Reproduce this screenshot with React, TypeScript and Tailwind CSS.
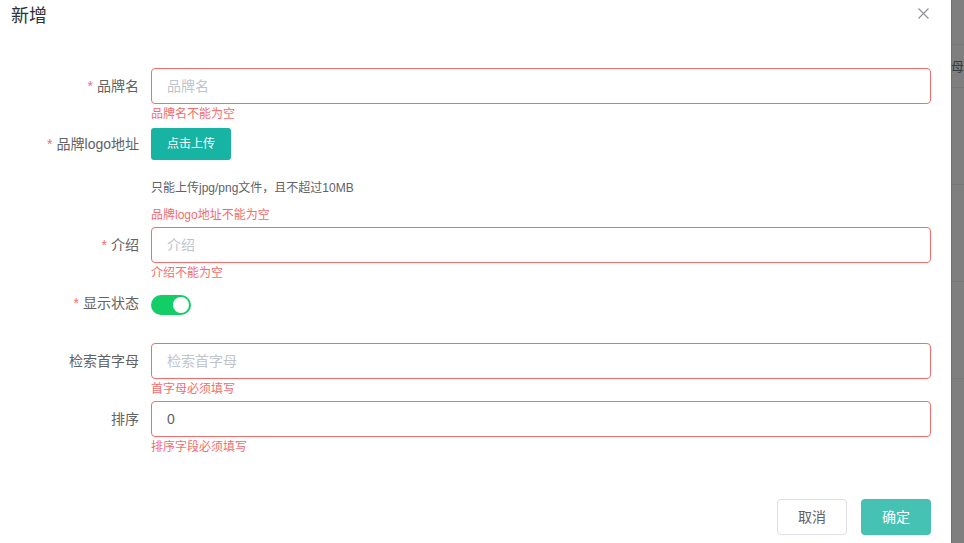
import React from "react";

const font = "font-['Liberation_Sans','Noto_Sans_CJK_SC',sans-serif]";

function Label({ text, required, lh }: { text: string; required?: boolean; lh: string }) {
  return (
    <div className={`w-[151px] shrink-0 pr-[12px] text-right text-[14px] text-[#606266] ${lh}`}>
      {required && <span className="mr-[4px] text-[#f56c6c]">*</span>}
      {text}
    </div>
  );
}

function Field({
  label,
  required,
  placeholder,
  value,
  error,
  h,
}: {
  label: string;
  required?: boolean;
  placeholder?: string;
  value?: string;
  error: string;
  h: string;
}) {
  return (
    <div className={`flex ${h}`}>
      <Label text={label} required={required} lh="leading-[36px]" />
      <div className="mr-[20px] flex-1">
        <div className="flex h-[36px] items-center rounded-[4px] border border-[#f56c6c] px-[15px] text-[14px]">
          {value ? (
            <span className="text-[#606266]">{value}</span>
          ) : (
            <span className="text-[#c0c4cc]">{placeholder}</span>
          )}
        </div>
        <p className="pt-[4px] text-[12px] leading-[13px] text-[#f56c6c]">{error}</p>
      </div>
    </div>
  );
}

export default function App() {
  return (
    <div className={`flex h-[543px] w-[964px] overflow-hidden bg-white ${font}`}>
      <div className="relative w-[951px] shrink-0 bg-white">
        <div className="flex h-[68px] items-start justify-between">
          <h2 className="pl-[11px] pt-[4px] text-[18px] leading-[24px] text-[#303133]">新增</h2>
          <svg className="mr-[22px] mt-[8px]" width="11" height="11" viewBox="0 0 11 11">
            <path d="M0.5 0.5L10.5 10.5M10.5 0.5L0.5 10.5" stroke="#909399" strokeWidth="1.2" />
          </svg>
        </div>

        <Field label="品牌名" required placeholder="品牌名" error="品牌名不能为空" h="h-[60px]" />

        <div className="flex h-[99px]">
          <Label text="品牌logo地址" required lh="leading-[32px]" />
          <div className="flex-1">
            <button className="h-[32px] w-[80px] rounded-[3px] bg-[#17b3a3] text-[12px] text-white">
              点击上传
            </button>
            <p className="mt-[21px] text-[12px] leading-[14px] text-[#606266]">
              只能上传jpg/png文件，且不超过10MB
            </p>
            <p className="mt-[13px] text-[12px] leading-[14px] text-[#f56c6c]">品牌logo地址不能为空</p>
          </div>
        </div>

        <Field label="介绍" required placeholder="介绍" error="介绍不能为空" h="h-[68px]" />

        <div className="flex h-[48px]">
          <Label text="显示状态" required lh="leading-[16px]" />
          <div className="flex h-[20px] w-[40px] items-center justify-end rounded-full bg-[#13ce66] px-[2px]">
            <div className="h-[16px] w-[16px] rounded-full bg-white" />
          </div>
        </div>

        <Field label="检索首字母" placeholder="检索首字母" error="首字母必须填写" h="h-[58px]" />

        <Field label="排序" value="0" error="排序字段必须填写" h="h-[98px]" />

        <div className="flex justify-end gap-[14px] pr-[20px]">
          <button className="h-[36px] w-[70px] rounded-[4px] border border-[#dcdfe6] bg-white text-[14px] text-[#606266]">
            取消
          </button>
          <button className="h-[36px] w-[70px] rounded-[4px] bg-[#46c2b5] text-[14px] text-white">
            确定
          </button>
        </div>
      </div>

      <div className="flex flex-1 flex-col border-l border-[#6f6f6f] bg-[#7f7f7f]">
        <div className="h-[45px] border-b border-[#767879]" />
        <div className="h-[43px] border-b border-[#767879] pt-[15px]">
          <span className="-ml-[1px] block text-[13px] leading-[14px] text-[#3a3c40]">母</span>
        </div>
        <div className="h-[97px] border-b border-[#767879]" />
        <div className="h-[97px] border-b border-[#767879]" />
        <div className="h-[97px] border-b border-[#767879]" />
      </div>
    </div>
  );
}
